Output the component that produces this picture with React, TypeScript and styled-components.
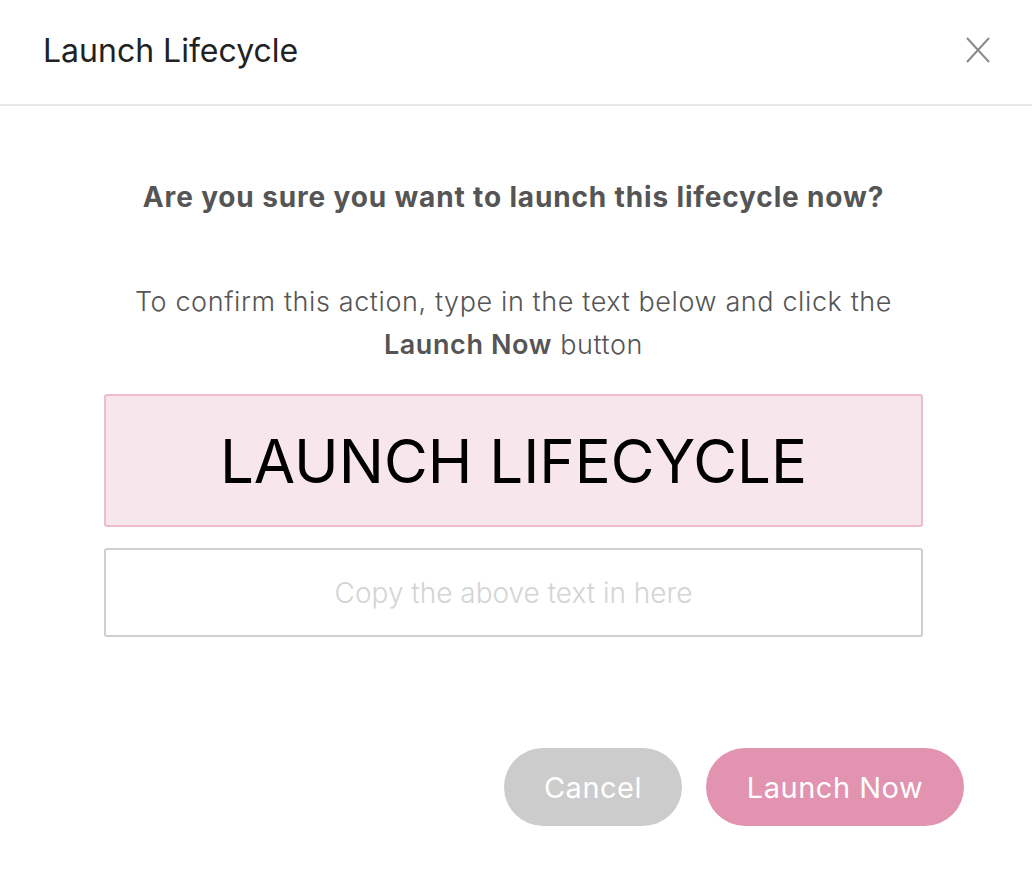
import React from "react";
import styled, { createGlobalStyle } from "styled-components";

const Global = createGlobalStyle`
  html, body { margin: 0; padding: 0; background: #ffffff; }
  body { font-family: Inter, "Noto Sans", sans-serif; }
  * { box-sizing: border-box; }
`;

const Dialog = styled.div`
  width: 1032px;
  min-height: 870px;
  background: #fff;
  display: flex;
  flex-direction: column;
`;

const Header = styled.div`
  height: 106px;
  border-bottom: 2px solid #e8e8e8;
  display: flex;
  align-items: center;
  justify-content: space-between;
  padding: 0 42px 2px 43px;
`;

const Title = styled.h1`
  margin: 0;
  font-size: 32px;
  font-weight: 400;
  color: #222;
  line-height: 38px;
`;

const CloseButton = styled.button`
  border: 0;
  background: none;
  padding: 0;
  width: 24px;
  height: 26px;
  margin-bottom: 2px;
  display: flex;
  align-items: center;
  justify-content: center;
  cursor: pointer;
`;

const Body = styled.div`
  display: flex;
  flex-direction: column;
  align-items: stretch;
  padding: 75px 109px 0 104px;
`;

const Question = styled.h2`
  margin: 0;
  font-size: 28px;
  font-weight: 700;
  color: #555;
  line-height: 32px;
  letter-spacing: 0.85px;
  text-align: center;
  white-space: nowrap;
`;

const Instructions = styled.p`
  margin: 67px -60px 0;
  font-size: 27px;
  font-weight: 300;
  color: #555;
  line-height: 43px;
  letter-spacing: 0.6px;
  text-align: center;
  strong { font-weight: 600; }
`;

const Phrase = styled.div`
  margin-top: 28px;
  height: 133px;
  background: #f8e6ed;
  border: 2px solid #efbccd;
  border-radius: 3px;
  display: flex;
  align-items: center;
  justify-content: center;
  font-size: 60px;
  font-weight: 400;
  color: #000;
`;

const Input = styled.input`
  margin-top: 21px;
  height: 89px;
  border: 2px solid #cfcfcf;
  border-radius: 3px;
  text-align: center;
  font-family: Inter, sans-serif;
  font-size: 28px;
  font-weight: 300;
  color: #333;
  outline: none;
  &::placeholder { color: #d4d4d4; }
`;

const Footer = styled.div`
  display: flex;
  justify-content: flex-end;
  gap: 24px;
  padding: 111px 68px 0 0;
`;

const Pill = styled.button<{ $primary?: boolean }>`
  height: 78px;
  padding: 0;
  width: ${p => (p.$primary ? "258px" : "178px")};
  border: 0;
  border-radius: 39px;
  background: ${p => (p.$primary ? "#e193af" : "#cccccc")};
  color: #fff;
  font-family: Inter, sans-serif;
  font-size: 29px;
  font-weight: 400;
  letter-spacing: 0.5px;
  cursor: pointer;
`;

export default function App() {
  return (
    <>
      <Global />
      <Dialog>
        <Header>
          <Title>Launch Lifecycle</Title>
          <CloseButton aria-label="Close">
            <svg width="24" height="26" viewBox="0 0 24 26">
              <path d="M1 1 L23 25 M23 1 L1 25" stroke="#8a8a8a" strokeWidth="2" fill="none" />
            </svg>
          </CloseButton>
        </Header>
        <Body>
          <Question>Are you sure you want to launch this lifecycle now?</Question>
          <Instructions>
            To confirm this action, type in the text below and click the
            <br />
            <strong>Launch Now</strong> button
          </Instructions>
          <Phrase>LAUNCH LIFECYCLE</Phrase>
          <Input placeholder="Copy the above text in here" />
        </Body>
        <Footer>
          <Pill>Cancel</Pill>
          <Pill $primary>Launch Now</Pill>
        </Footer>
      </Dialog>
    </>
  );
}
